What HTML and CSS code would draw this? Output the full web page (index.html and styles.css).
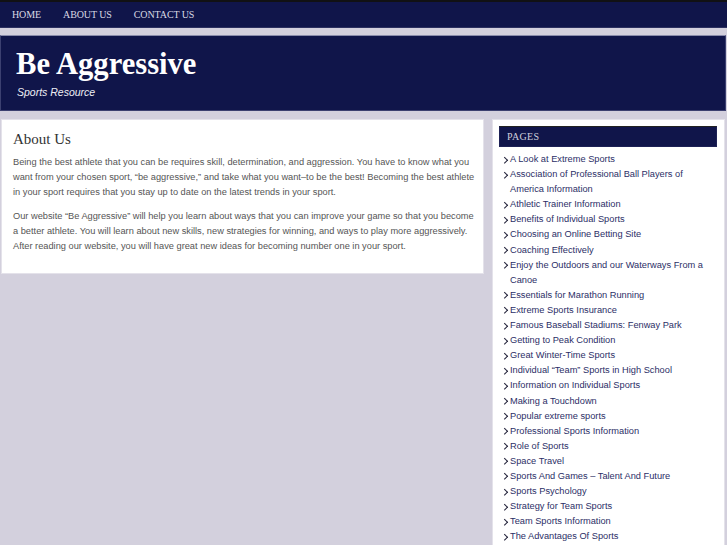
FILE: index.html
```html
<!DOCTYPE html>
<html lang="en">
<head>
<meta charset="utf-8">
<title>Be Aggressive</title>
<link rel="stylesheet" href="styles.css">
</head>
<body>
<nav class="topnav">
  <a href="#" class="navlink">Home</a>
  <a href="#" class="navlink">About Us</a>
  <a href="#" class="navlink">Contact Us</a>
</nav>
<header class="masthead">
  <h1 class="site-title">Be Aggressive</h1>
  <p class="site-desc">Sports Resource</p>
</header>
<div class="main">
  <article class="content">
    <h2 class="page-title">About Us</h2>
    <p>Being the best athlete that you can be requires skill, determination, and aggression. You have to know what you want from your chosen sport, “be aggressive,” and take what you want–to be the best! Becoming the best athlete in your sport requires that you stay up to date on the latest trends in your sport.</p>
    <p>Our website “Be Aggressive” will help you learn about ways that you can improve your game so that you become a better athlete. You will learn about new skills, new strategies for winning, and ways to play more aggressively. After reading our website, you will have great new ideas for becoming number one in your sport.</p>
  </article>
  <aside class="sidebar">
    <h3 class="widget-title">Pages</h3>
    <ul class="pages">
      <li><a href="#">A Look at Extreme Sports</a></li>
      <li><a href="#">Association of Professional Ball Players of America Information</a></li>
      <li><a href="#">Athletic Trainer Information</a></li>
      <li><a href="#">Benefits of Individual Sports</a></li>
      <li><a href="#">Choosing an Online Betting Site</a></li>
      <li><a href="#">Coaching Effectively</a></li>
      <li><a href="#">Enjoy the Outdoors and our Waterways From a Canoe</a></li>
      <li><a href="#">Essentials for Marathon Running</a></li>
      <li><a href="#">Extreme Sports Insurance</a></li>
      <li><a href="#">Famous Baseball Stadiums: Fenway Park</a></li>
      <li><a href="#">Getting to Peak Condition</a></li>
      <li><a href="#">Great Winter-Time Sports</a></li>
      <li><a href="#">Individual “Team” Sports in High School</a></li>
      <li><a href="#">Information on Individual Sports</a></li>
      <li><a href="#">Making a Touchdown</a></li>
      <li><a href="#">Popular extreme sports</a></li>
      <li><a href="#">Professional Sports Information</a></li>
      <li><a href="#">Role of Sports</a></li>
      <li><a href="#">Space Travel</a></li>
      <li><a href="#">Sports And Games – Talent And Future</a></li>
      <li><a href="#">Sports Psychology</a></li>
      <li><a href="#">Strategy for Team Sports</a></li>
      <li><a href="#">Team Sports Information</a></li>
      <li><a href="#">The Advantages Of Sports</a></li>
    </ul>
  </aside>
</div>
</body>
</html>
```
FILE: styles.css
```css
html, body {
  margin: 0;
  padding: 0;
}
body {
  background: #d3d0dd;
  font-family: "Liberation Sans", Arial, sans-serif;
  overflow: hidden;
  height: 545px;
}
.topnav {
  background: #10154a;
  border-top: 2px solid #111114;
  border-bottom: 1px solid #2c3060;
  height: 25px;
  display: flex;
  align-items: center;
  padding-left: 1px;
}
.navlink {
  font-family: "Liberation Serif", "Times New Roman", serif;
  font-size: 10px;
  text-transform: uppercase;
  color: #d9d9e4;
  text-decoration: none;
  padding: 0 11px;
  letter-spacing: -0.1px;
}
.masthead {
  margin-top: 7px;
  width: 724px;
  height: 74px;
  background: #10154a;
  border: 1px solid #3c4070;
  border-top-color: #8a8cab;
  padding: 0;
}
.site-title {
  margin: 0;
  padding: 11px 0 0 15px;
  font-family: "Liberation Serif", "Times New Roman", serif;
  font-weight: bold;
  font-size: 30.6px;
  line-height: 34px;
  color: #ffffff;
}
.site-desc {
  margin: 5px 0 0 16px;
  font-style: italic;
  font-size: 10.5px;
  line-height: 12px;
  color: #eeeef4;
}
.main {
  display: flex;
  align-items: flex-start;
  gap: 8px;
  margin-top: 8px;
  padding-left: 1px;
}
.content {
  width: 466px;
  background: #ffffff;
  border: 1px solid #e4e2ea;
  padding: 9px 4px 19px 11px;
  color: #555555;
  font-size: 9.25px;
  line-height: 15px;
}
.page-title {
  margin: 0 0 6px 0;
  font-family: "Liberation Serif", "Times New Roman", serif;
  font-weight: normal;
  font-size: 15px;
  line-height: 20px;
  color: #333333;
}
.content p {
  margin: 0 0 9px 0;
}
.content p:last-child {
  margin-bottom: 0;
}
.sidebar {
  width: 218px;
  background: #ffffff;
  border: 1px solid #e4e2ea;
  padding: 6px 7px 0 6px;
  min-height: 430px;
}
.widget-title {
  margin: 0;
  height: 21px;
  background: #10154a;
  border: 1px solid #1d2155;
  border-top-color: #222;
  box-sizing: border-box;
  padding-left: 7px;
  font-family: "Liberation Serif", "Times New Roman", serif;
  font-weight: normal;
  font-size: 10px;
  line-height: 19px;
  text-transform: uppercase;
  letter-spacing: 0.3px;
  color: #cfd0dc;
}
.pages {
  list-style: none;
  margin: 5px 0 0 0;
  padding: 0 0 0 3px;
  font-size: 9.25px;
  line-height: 15.1px;
}
.pages li {
  position: relative;
  padding-left: 8px;
}
.pages li::before {
  content: "";
  position: absolute;
  left: -0.5px;
  top: 5.5px;
  width: 3.5px;
  height: 3.5px;
  border-right: 1.4px solid #23233a;
  border-bottom: 1.4px solid #23233a;
  transform: rotate(-45deg);
}
.pages a {
  color: #2b2e66;
  text-decoration: none;
}
```
